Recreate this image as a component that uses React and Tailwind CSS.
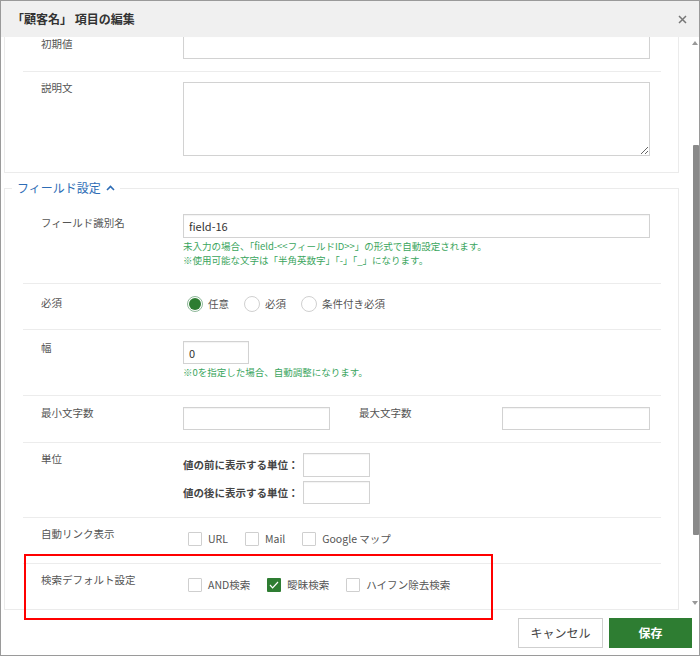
import React from 'react';

const font = "font-['Noto_Sans_CJK_JP','Noto_Sans',sans-serif]";

function Row({ label, labelClass = '', className = '', children, last }) {
  return (
    <div className={`flex items-start pl-[18px] pr-[11px] ${last ? '' : 'border-b border-[#ececec]'} ${className}`}>
      <div className={`w-[142px] shrink-0 text-[10.5px] leading-[14px] text-[#555] ${labelClass}`}>{label}</div>
      <div className="flex-1 min-w-0">{children}</div>
    </div>
  );
}

function Input({ className = '', value }) {
  return (
    <input
      readOnly
      value={value || ''}
      className={`block border border-[#d2d2d2] bg-white px-[5px] text-[11px] text-[#333] outline-none shadow-[inset_0_1px_1px_rgba(0,0,0,0.05)] ${className}`}
    />
  );
}

function Help({ children }) {
  return <div className="text-[9.5px] leading-[14px] text-[#3aa55d]">{children}</div>;
}

function Radio({ checked, label }) {
  return (
    <label className="flex items-center gap-[5px]">
      {checked ? (
        <span className="flex h-[16px] w-[16px] items-center justify-center rounded-full border border-[#8fb99a] bg-white">
          <span className="h-[12px] w-[12px] rounded-full bg-[#2e7d32]" />
        </span>
      ) : (
        <span className="h-[16px] w-[16px] rounded-full border border-[#d0d0d0] bg-white" />
      )}
      <span className="text-[10.5px] leading-[14px] text-[#555]">{label}</span>
    </label>
  );
}

function Check({ checked, label }) {
  return (
    <label className="flex items-center gap-[6px]">
      {checked ? (
        <span className="flex h-[14px] w-[14px] items-center justify-center rounded-[1px] bg-[#2e7d32]">
          <svg width="10" height="8" viewBox="0 0 10 8" fill="none">
            <path d="M1 4l2.6 2.8L9 1" stroke="#fff" strokeWidth="1.2" />
          </svg>
        </span>
      ) : (
        <span className="h-[14px] w-[14px] rounded-[1px] border border-[#cfcfcf] bg-white" />
      )}
      <span className="text-[10.5px] leading-[14px] text-[#555]">{label}</span>
    </label>
  );
}

export default function App() {
  return (
    <div className={`relative flex h-[656px] w-[700px] flex-col border border-[#9a9a9a] bg-white ${font}`}>
      {/* header */}
      <div className="relative z-10 flex h-[36px] shrink-0 items-center justify-between bg-[#f0f0f0] pl-[11px] pr-[12px]">
        <div className="text-[12px] font-bold text-[#333]">「顧客名」 項目の編集</div>
        <svg width="9" height="9" viewBox="0 0 9 9" className="mt-[1px]">
          <path d="M1 1l7 7M8 1L1 8" stroke="#777" strokeWidth="1.5" />
        </svg>
      </div>

      {/* body */}
      <div className="relative flex-1 overflow-hidden">
        <div className="-mt-[14px] pl-[3px] pr-[20px]">
          <div className="border border-t-0 border-[#ebebeb] pl-[18px] pr-[17px]">
            <Row label="初期値" className="pt-[12px] pb-[12px]" labelClass="mt-[2px]">
              <Input className="h-[24px] w-full" />
            </Row>
            <Row label="説明文" className="pt-[10px] pb-[16px]" labelClass="-mt-[1px]" last>
              <textarea readOnly className="block h-[74px] w-full border border-[#d2d2d2] outline-none" />
            </Row>
          </div>

          <fieldset className="mt-[6px] border border-[#ebebeb]">
            <legend className="ml-[7px] flex items-center gap-[5px] px-[5px] text-[12px] leading-[18px] text-[#2d6cb5]">
              フィールド設定
              <svg width="9" height="6" viewBox="0 0 9 6" fill="none">
                <path d="M1 5l3.5-3.5L8 5" stroke="#2d6cb5" strokeWidth="1.6" />
              </svg>
            </legend>
            <div className="pl-[18px] pr-[17px]">
              <Row label="フィールド識別名" className="pt-[17px] pb-[16px]" labelClass="mt-[2px]">
                <Input className="h-[24px] w-full" value="field-16" />
                <div className="mt-[1px]">
                  <Help>未入力の場合、「field-&lt;&lt;フィールドID&gt;&gt;」の形式で自動設定されます。</Help>
                  <Help>※使用可能な文字は「半角英数字」「-」「_」になります。</Help>
                </div>
              </Row>
              <Row label="必須" className="pt-[12px] pb-[17px]">
                <div className="flex items-center gap-[15px] pl-[4px]">
                  <Radio checked label="任意" />
                  <Radio label="必須" />
                  <Radio label="条件付き必須" />
                </div>
              </Row>
              <Row label="幅" className="pt-[11px] pb-[16px]">
                <Input className="h-[23px] w-[66px]" value="0" />
                <div className="mt-[1px]">
                  <Help>※0を指定した場合、自動調整になります。</Help>
                </div>
              </Row>
              <Row label="最小文字数" className="pt-[11px] pb-[12px]" labelClass="-mt-[1px]">
                <div className="flex items-start">
                  <Input className="h-[23px] w-[147px]" />
                  <div className="ml-[29px] w-[143px] text-[10.5px] leading-[14px] text-[#555] -mt-[1px]">最大文字数</div>
                  <Input className="h-[23px] w-[148px]" />
                </div>
              </Row>
              <Row label="単位" className="pt-[10px] pb-[13px]" labelClass="-mt-[1px]">
                <div className="flex flex-col gap-[4px]">
                  <div className="flex items-center">
                    <span className="w-[120px] text-[10.5px] font-bold text-[#444]">値の前に表示する単位：</span>
                    <Input className="h-[24px] w-[67px]" />
                  </div>
                  <div className="flex items-center">
                    <span className="w-[120px] text-[10.5px] font-bold text-[#444]">値の後に表示する単位：</span>
                    <Input className="h-[23px] w-[67px]" />
                  </div>
                </div>
              </Row>
              <Row label="自動リンク表示" className="pt-[9px] pb-[17px]">
                <div className="mt-[5px] flex items-center gap-[17px] pl-[5px]">
                  <Check label="URL" />
                  <Check label="Mail" />
                  <Check label="Google マップ" />
                </div>
              </Row>
              <Row label="検索デフォルト設定" className="pt-[9px] pb-[17px]" last>
                <div className="mt-[5px] flex items-center gap-[17px] pl-[5px]">
                  <Check label="AND検索" />
                  <Check checked label="曖昧検索" />
                  <Check label="ハイフン除去検索" />
                </div>
              </Row>
            </div>
          </fieldset>
        </div>

        {/* scrollbar */}
        <div className="absolute right-[1px] top-[4px] h-0 w-0 border-x-[3px] border-b-[4px] border-x-transparent border-b-[#999]" />
        <div className="absolute right-0 top-[108px] h-[390px] w-[6px] rounded-[1px] bg-[#8a8a8a]" />
        <div className="absolute bottom-[5px] right-[1px] h-0 w-0 border-x-[3px] border-t-[4px] border-x-transparent border-t-[#999]" />
      </div>

      {/* footer */}
      <div className="flex h-[45px] shrink-0 items-center justify-end gap-[6px] pr-[7px]">
        <button className="h-[30px] w-[85px] border border-[#cfcfcf] bg-white text-[12px] text-[#444]">キャンセル</button>
        <button className="h-[30px] w-[83px] bg-[#2e7d32] text-[12px] font-bold text-white">保存</button>
      </div>

      {/* highlight */}
      <div className="absolute left-[23px] top-[553px] h-[66px] w-[469px] border-[2.5px] border-[#ff0000]" />
    </div>
  );
}
